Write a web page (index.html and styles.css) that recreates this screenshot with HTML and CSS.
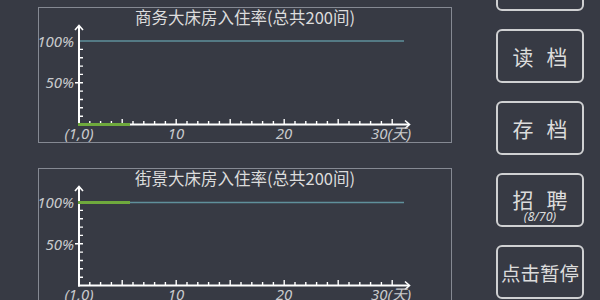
FILE: index.html
```html
<!DOCTYPE html>
<html lang="zh-CN">
<head>
    <meta charset="UTF-8">
    <meta name="viewport" content="width=device-width, initial-scale=1.0">
    <title>酒店经营</title>
    <link rel="stylesheet" href="styles.css">
</head>
<body>
    <div class="page">
        <div class="charts">
            <div class="chart">
                <svg class="plot" width="412" height="134">
                    <text class="title" x="206" y="16">商务大床房入住率(总共200间)</text>
                    <line class="full" x1="39" y1="33" x2="365" y2="33"/>
                    <path class="ticks" d=""/>
                    <line class="axis" x1="40" y1="18" x2="40" y2="117.5"/>
                    <line class="axis" x1="39" y1="116.5" x2="370" y2="116.5"/>
                    <polyline class="arrow" points="36,22 40,17.5 44,22"/>
                    <polyline class="arrow" points="366,112.5 370.5,116.5 366,120.5"/>
                    <line class="used" x1="39" y1="116.5" x2="91" y2="116.5"/>
                    <text class="ylabel" x="35" y="38.5">100%</text>
                    <text class="ylabel" x="35" y="80">50%</text>
                    <text class="xlabel" x="40" y="131">(1,0)</text>
                    <text class="xlabel" x="137" y="131">10</text>
                    <text class="xlabel" x="245" y="131">20</text>
                    <text class="xlabel" x="352" y="131">30(天)</text>
                </svg>
            </div>
            <div class="chart">
                <svg class="plot" width="412" height="134">
                    <text class="title" x="206" y="16">街景大床房入住率(总共200间)</text>
                    <line class="full" x1="39" y1="33.5" x2="365" y2="33.5"/>
                    <path class="ticks" d=""/>
                    <line class="axis" x1="40" y1="18" x2="40" y2="117.5"/>
                    <line class="axis" x1="39" y1="116.5" x2="370" y2="116.5"/>
                    <polyline class="arrow" points="36,22 40,17.5 44,22"/>
                    <polyline class="arrow" points="366,112.5 370.5,116.5 366,120.5"/>
                    <line class="used" x1="39" y1="33.5" x2="91" y2="33.5"/>
                    <text class="ylabel" x="35" y="39">100%</text>
                    <text class="ylabel" x="35" y="80.5">50%</text>
                    <text class="xlabel" x="40" y="131">(1,0)</text>
                    <text class="xlabel" x="137" y="131">10</text>
                    <text class="xlabel" x="245" y="131">20</text>
                    <text class="xlabel" x="352" y="131">30(天)</text>
                </svg>
            </div>
        </div>
        <div class="menu">
            <button class="btn"><span class="spaced">新局</span></button>
            <button class="btn"><span class="spaced">读档</span></button>
            <button class="btn"><span class="spaced">存档</span></button>
            <button class="btn btn-sub">
                <span class="spaced">招聘</span>
                <span class="sub">(8/70)</span>
            </button>
            <button class="btn btn-wide">点击暂停</button>
        </div>
    </div>
    <script>
        // 坐标轴刻度: y轴每10%一格, x轴每天一格
        let ticks = document.querySelectorAll('.ticks');
        for(let i = 0; i < ticks.length; i++){
            let d = '';
            for(let k = 1; k < 10; k++){
                let y = 116.5 - k * 8.35;
                let x0 = k == 5 ? 36 : 41;
                d += `M${x0} ${y.toFixed(1)}H44 `;
            }
            for(let day = 2; day <= 30; day++){
                let x = 40 + (day - 1) * 10.8;
                let h = day % 5 == 0 ? 5 : 3;
                d += `M${x.toFixed(1)} 116V${116 - h} `;
            }
            ticks[i].setAttribute('d', d);
        }
    </script>
</body>
</html>
```

FILE: styles.css
```css
body{
    margin: 0;
    width: 600px;
    height: 300px;
    overflow: hidden;
    background-color: #373a44;
    font-family: "Noto Sans CJK SC", "Noto Sans", sans-serif;
}
.page{
    display: flex;
    align-items: flex-start;
}
.charts{
    display: flex;
    flex-direction: column;
    gap: 25px;
    padding: 7px 0 0 38px;
}
.chart{
    width: 412px;
    height: 134px;
    border: 1px solid #858993;
}
.plot{
    display: block;
    overflow: visible;
}
.title{
    fill: #dcdcdc;
    font-size: 16.5px;
    text-anchor: middle;
    font-family: "Noto Sans CJK SC", sans-serif;
}
.full{
    stroke: #5f909b;
    stroke-width: 1.5;
}
.axis{
    stroke: #fff;
    stroke-width: 2;
}
.arrow{
    fill: none;
    stroke: #fff;
    stroke-width: 1.6;
}
.ticks{
    stroke: #fff;
    stroke-width: 1.4;
}
.used{
    stroke: #6fa93d;
    stroke-width: 3;
}
.ylabel, .xlabel{
    fill: #c9cacd;
    font-size: 15px;
    font-style: italic;
    font-family: "Noto Sans", "Noto Sans CJK SC", sans-serif;
}
.ylabel{
    text-anchor: end;
}
.xlabel{
    text-anchor: middle;
}
.menu{
    display: flex;
    flex-direction: column;
    gap: 18px;
    margin: -43px 0 0 44px;
}
.btn{
    width: 88px;
    height: 54px;
    padding: 0;
    border: 2px solid #cfd0d2;
    border-radius: 6px;
    background-color: transparent;
    color: #dcdcdc;
    font-family: "Noto Sans CJK SC", sans-serif;
    font-size: 21px;
    display: flex;
    flex-direction: column;
    justify-content: center;
    align-items: center;
}
.spaced{
    letter-spacing: 13px;
    padding-left: 13px;
    line-height: 24px;
}
.btn-sub{
    padding-top: 12px;
}
.btn-sub .spaced{
    line-height: 22px;
}
.sub{
    font-family: "Noto Sans", sans-serif;
    font-size: 12.5px;
    font-style: italic;
    line-height: 14px;
}
.btn-wide{
    font-size: 19.5px;
    letter-spacing: 0;
}
```
